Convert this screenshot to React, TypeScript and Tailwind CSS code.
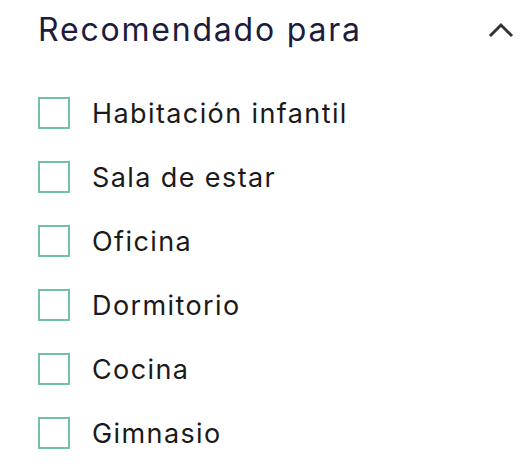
import React from "react";

const items = ["Habitación infantil", "Sala de estar", "Oficina", "Dormitorio", "Cocina", "Gimnasio"];

export default function App() {
  return (
    <div className="w-[524px] h-[466px] bg-white pl-[38px] pr-[10px]" style={{ fontFamily: "Inter, 'Open Sans', sans-serif" }}>
      <div className="flex items-center justify-between h-[60px]">
        <span className="text-[32px] text-[#1c1c3c] leading-none tracking-[1.8px]">Recomendado para</span>
        <svg width="26" height="16" viewBox="0 0 26 16">
          <path d="M2 14 L13 3 L24 14" fill="none" stroke="#333" strokeWidth="3" />
        </svg>
      </div>
      <div className="flex flex-col mt-[21px]">
        {items.map((t) => (
          <label key={t} className="flex items-center h-[64px]">
            <span className="w-[32px] h-[32px] border-2 border-[#74c0a4] shrink-0" />
            <span className="ml-[22px] text-[27px] text-[#1a1a1a] leading-none tracking-[1.4px]">{t}</span>
          </label>
        ))}
      </div>
    </div>
  );
}
